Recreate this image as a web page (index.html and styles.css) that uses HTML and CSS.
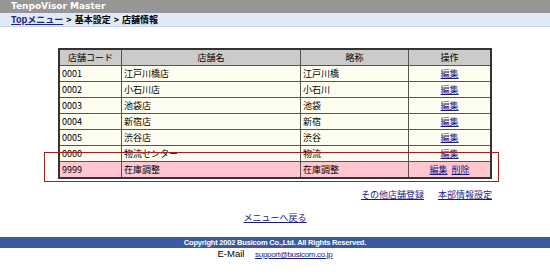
FILE: index.html
```html
<!DOCTYPE html>
<html lang="ja">
<head>
<meta charset="UTF-8">
<title>TenpoVisor Master</title>
<link rel="stylesheet" href="styles.css">
</head>
<body>

<div class="title-bar">TenpoVisor Master</div>
<div class="crumbs">
  <a href="#">Topメニュー</a> &gt; 基本設定 &gt; 店舗情報
</div>

<div class="main">
  <div class="table-wrap">
    <table class="shops">
      <tr>
        <th class="c-code">店舗コード</th>
        <th class="c-name">店舗名</th>
        <th class="c-short">略称</th>
        <th class="c-op">操作</th>
      </tr>
      <tr><td>0001</td><td>江戸川橋店</td><td>江戸川橋</td><td class="op"><a href="#">編集</a></td></tr>
      <tr><td>0002</td><td>小石川店</td><td>小石川</td><td class="op"><a href="#">編集</a></td></tr>
      <tr><td>0003</td><td>池袋店</td><td>池袋</td><td class="op"><a href="#">編集</a></td></tr>
      <tr><td>0004</td><td>新宿店</td><td>新宿</td><td class="op"><a href="#">編集</a></td></tr>
      <tr><td>0005</td><td>渋谷店</td><td>渋谷</td><td class="op"><a href="#">編集</a></td></tr>
      <tr><td>0000</td><td>物流センター</td><td>物流</td><td class="op"><a href="#">編集</a></td></tr>
      <tr class="special"><td>9999</td><td>在庫調整</td><td>在庫調整</td><td class="op"><a href="#">編集</a>&nbsp; <a href="#">削除</a></td></tr>
    </table>
    <!-- highlight around the adjustment row -->
    <div class="mark"></div>
  </div>

  <div class="sub-links">
    <a href="#">その他店舗登録</a>
    <a href="#">本部情報設定</a>
  </div>

  <div class="back"><a href="#">メニューへ戻る</a></div>
</div>

<div class="footer">Copyright 2002 Busicom Co.,Ltd. All Rights Reserved.</div>
<div class="mail">E-Mail <a href="#">support@busicom.co.jp</a></div>

</body>
</html>
```

FILE: styles.css
```css
body {
  margin: 0;
  padding: 0;
  background-color: #fff;
  color: #000;
  font-family: "Noto Sans CJK JP", "DejaVu Sans", sans-serif;
  font-size: 9px;
}

a {
  color: #1a1a8c;
}

.title-bar {
  height: 13px;
  line-height: 13px;
  padding-left: 11px;
  background-color: #969696;
  color: #fff;
  font-weight: bold;
  font-size: 9px;
  font-family: "DejaVu Sans", sans-serif;
}

.crumbs {
  height: 13px;
  line-height: 13px;
  padding-left: 11px;
  background-color: #dfeaf6;
  border-bottom: 1px solid #c9d6e6;
  font-weight: bold;
  font-size: 9px;
  word-spacing: 1px;
}

.crumbs a {
  color: #22228a;
}

.main {
  width: 434px;
  margin: 21px auto 0;
}

.table-wrap {
  position: relative;
}

.shops {
  width: 100%;
  border-collapse: collapse;
  border: 2px solid #333;
}

.shops th,
.shops td {
  border: 1px solid #555;
  height: 15px;
  padding: 0 2px;
  line-height: 15px;
  font-weight: normal;
  white-space: nowrap;
}

.shops th {
  background-color: #cbcbcb;
  text-align: center;
}

.shops td {
  background-color: #fefef0;
}

.shops .special td {
  background-color: #ffc6cf;
}

.c-code { width: 57px; }
.c-name { width: 174px; }
.c-short { width: 103px; }

.shops .op {
  text-align: center;
}

.mark {
  position: absolute;
  left: -14px;
  right: -7px;
  top: 104px;
  height: 28px;
  border: 1px solid #b01818;
}

.sub-links {
  margin-top: 9px;
  display: flex;
  justify-content: flex-end;
  gap: 14px;
  line-height: 14px;
}

.back {
  margin-top: 9px;
  text-align: center;
  line-height: 14px;
}

.footer {
  margin-top: 12px;
  height: 11px;
  line-height: 11px;
  background-color: #3a5aa2;
  color: #fff;
  text-align: center;
  font-size: 7.5px;
  letter-spacing: -0.2px;
  font-weight: bold;
  font-family: "Liberation Sans", sans-serif;
}

.mail {
  text-align: center;
  line-height: 12px;
  font-size: 9.5px;
  font-family: "Liberation Sans", sans-serif;
}

.mail a {
  margin-left: 8px;
  font-size: 8px;
  letter-spacing: -0.3px;
}
```
